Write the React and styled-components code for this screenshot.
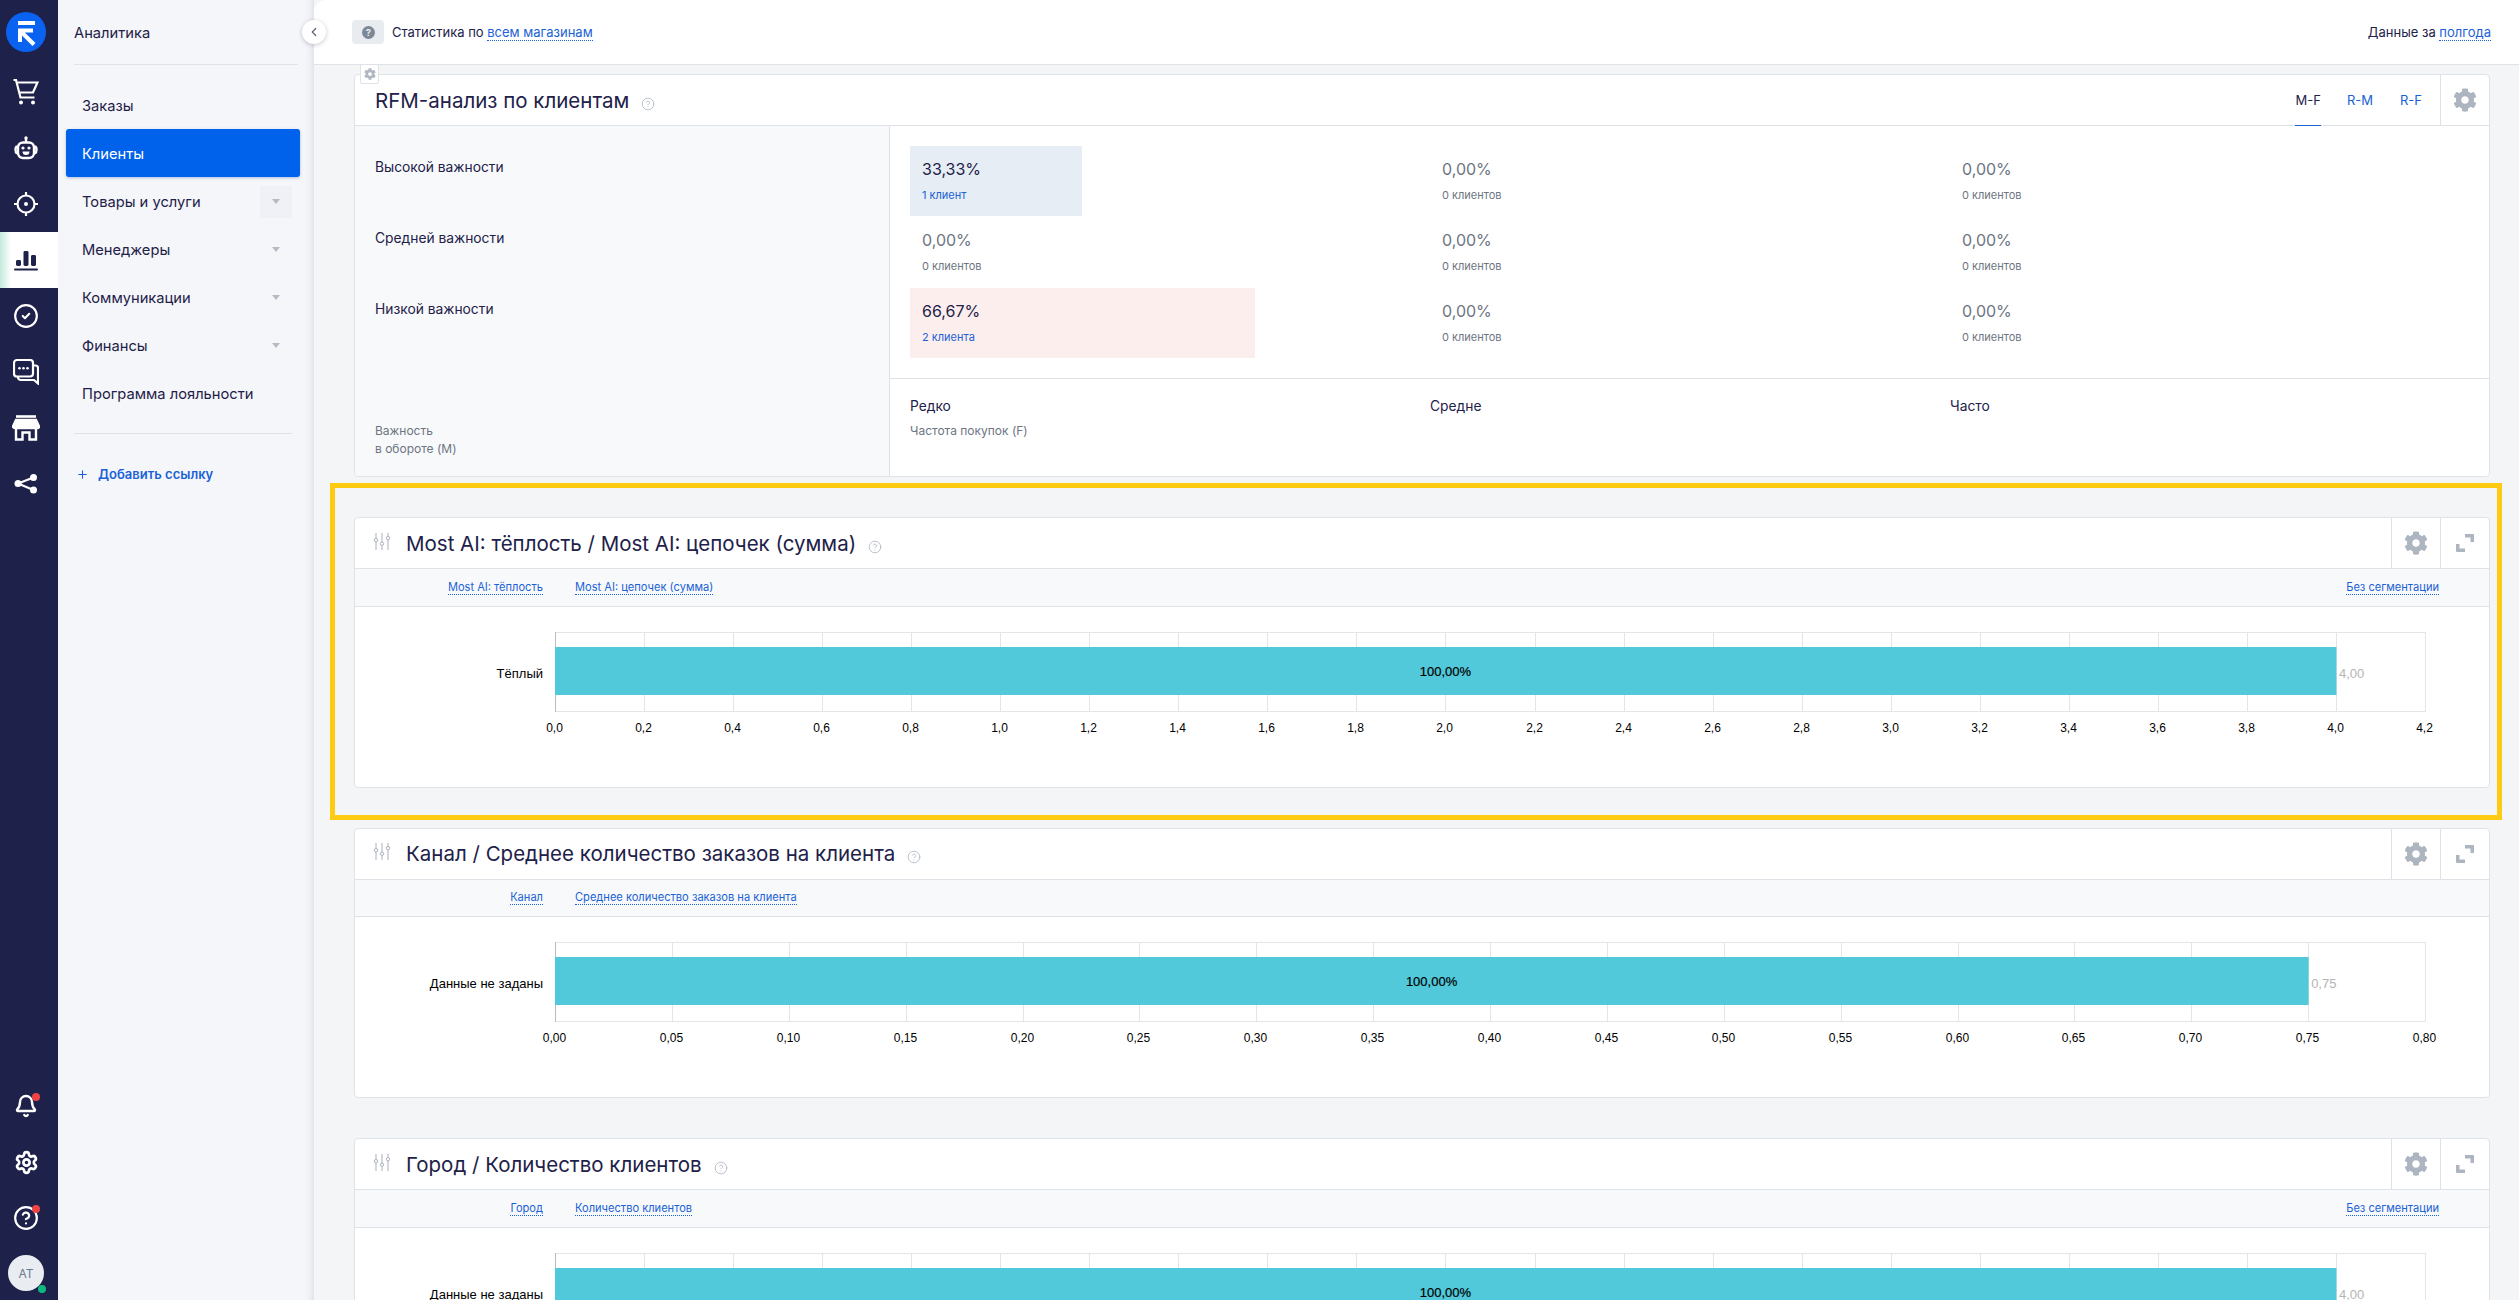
import React from "react";
import styled, { createGlobalStyle } from "styled-components";
import { CircleCheck, CircleHelp, Bell, Settings, ChevronLeft, Plus } from "lucide-react";
import { FaCog } from "react-icons/fa";

const NAVY = "#1e2149";
const LINK = "#1a62d6";
const LINE = "#dfe3e8";

const GlobalStyle = createGlobalStyle`
  html, body {
    margin: 0;
    height: 100%;
    overflow: hidden;
    background: #f4f5f7;
    font-family: Inter, "Noto Sans", sans-serif;
    color: ${NAVY};
  }
  * { box-sizing: border-box; }
`;

const Page = styled.div`
  display: flex;
  height: 1300px;
  overflow: hidden;
`;

const Rail = styled.nav`
  flex: 0 0 58px;
  display: flex;
  flex-direction: column;
  background: ${NAVY};
  color: #fff;
`;

const LogoSlot = styled.div`
  height: 64px;
  display: flex;
  align-items: center;
  justify-content: center;
  padding-right: 6px;
`;

const RailItem = styled.div`
  position: relative;
  height: 56px;
  display: flex;
  align-items: center;
  justify-content: center;
  padding-right: 6px;
  color: ${(p) => (p.$active ? NAVY : "#fff")};
  background: ${(p) => (p.$active ? "linear-gradient(90deg, #c4e9da 0, #fff 11px)" : "transparent")};
`;

const RedDot = styled.span`
  position: absolute;
  top: 15px;
  left: 32px;
  width: 8px;
  height: 8px;
  border-radius: 50%;
  background: #ef4444;
`;

const RailBottom = styled.div`
  margin-top: auto;
  padding-bottom: 9px;
`;

const Avatar = styled.div`
  position: relative;
  margin: 9px 0 0 8px;
  width: 36px;
  height: 36px;
  border-radius: 50%;
  background: #e9edf1;
  color: #6b7a90;
  font-size: 12px;
  display: flex;
  align-items: center;
  justify-content: center;
`;

const OnlineDot = styled.span`
  position: absolute;
  right: -2px;
  bottom: -2px;
  width: 8px;
  height: 8px;
  border-radius: 50%;
  background: #10b981;
`;

const SubMenu = styled.aside`
  position: relative;
  z-index: 2;
  flex: 0 0 256px;
  background: #f5f6f9;
  box-shadow: inset -10px 0 10px -10px rgba(30, 33, 73, 0.16);
`;

const MenuTitle = styled.div`
  margin-left: 16px;
  width: 224px;
  height: 65px;
  border-bottom: 1px solid ${LINE};
  font-size: 14.7px;
  line-height: 66px;
`;

const MenuList = styled.div`
  padding-top: 16px;
`;

const MenuItem = styled.div`
  display: flex;
  align-items: center;
  margin: 0 14px 0 8px;
  height: 48px;
  padding: 1px 8px 0 16px;
  border-radius: 3px;
  font-size: 14.7px;
  color: ${(p) => (p.$active ? "#fff" : NAVY)};
  background: ${(p) => (p.$active ? "#0061ea" : "transparent")};
  box-shadow: ${(p) => (p.$active ? "0 1px 3px rgba(0, 60, 160, 0.3)" : "none")};
`;

const CaretBox = styled.span`
  margin-left: auto;
  width: 32px;
  height: 32px;
  border-radius: 3px;
  display: flex;
  align-items: center;
  justify-content: center;
  background: ${(p) => (p.$hover ? "#eff1f6" : "transparent")};
  &::after {
    content: "";
    border-left: 4px solid transparent;
    border-right: 4px solid transparent;
    border-top: 5px solid #b4bbc6;
  }
`;

const MenuDivider = styled.div`
  margin: 16px 0 0 16px;
  width: 218px;
  border-top: 1px solid ${LINE};
`;

const AddLink = styled.div`
  display: flex;
  align-items: center;
  gap: 9px;
  margin-top: 20px;
  padding-left: 18px;
  height: 40px;
  color: ${LINK};
  font-size: 13px;
  font-weight: 600;
`;

const CollapseButton = styled.button`
  position: absolute;
  top: 20px;
  right: -12px;
  width: 24px;
  height: 24px;
  padding: 0;
  border: 0;
  border-radius: 50%;
  background: #fff;
  color: #5e6678;
  box-shadow: 0 1px 4px rgba(30, 33, 73, 0.25);
  display: flex;
  align-items: center;
  justify-content: center;
`;

const Main = styled.main`
  flex: 1;
  min-width: 0;
`;

const TopBar = styled.header`
  height: 65px;
  background: #fff;
  border-bottom: 1px solid ${LINE};
  border-top-left-radius: 12px;
  padding: 0 28px 0 38px;
  display: flex;
  align-items: center;
  font-size: 13px;
`;

const StatBadge = styled.span`
  width: 32px;
  height: 24px;
  margin-right: 8px;
  border-radius: 4px;
  background: #e8ebef;
  display: flex;
  align-items: center;
  justify-content: center;
`;

const DotLink = styled.span`
  color: ${LINK};
  border-bottom: 1px dotted ${LINK};
  white-space: nowrap;
`;

const TopRight = styled.div`
  margin-left: auto;
`;

const Content = styled.div`
  padding: 9px 29px 0 40px;
  display: flex;
  flex-direction: column;
  gap: 40px;
`;

const Card = styled.section`
  position: relative;
  background: #fff;
  border: 1px solid ${LINE};
  border-radius: 4px;
  ${(p) =>
    p.$highlight &&
    `&::after {
      content: "";
      position: absolute;
      top: -35px;
      left: -25px;
      right: -13px;
      bottom: -33px;
      border: 5px solid #ffcb12;
      pointer-events: none;
    }`}
`;

const GearTab = styled.span`
  position: absolute;
  top: -11px;
  left: 5px;
  width: 19px;
  height: 20px;
  background: #fff;
  border: 1px solid ${LINE};
  border-radius: 2px;
  color: #b0b8c3;
  display: flex;
  align-items: center;
  justify-content: center;
`;

const CardHeader = styled.div`
  height: 51px;
  display: flex;
  align-items: center;
  border-bottom: 1px solid ${LINE};
  padding-left: ${(p) => (p.$plain ? "20px" : "18px")};
`;

const CardTitle = styled.h2`
  margin: 0;
  font-size: 20.5px;
  font-weight: 400;
  white-space: nowrap;
`;

const HelpMark = styled.span`
  display: flex;
  margin: 7px 0 0 12px;
  color: #b4bbc7;
`;

const SlidersMark = styled.span`
  display: flex;
  margin: -4px 15px 0 0;
  color: #a9b1bd;
`;

const HeaderRight = styled.div`
  margin-left: auto;
  align-self: stretch;
  display: flex;
`;

const Tab = styled.div`
  margin: 0 ${(p) => p.$gap}px -1px 0;
  display: flex;
  align-items: center;
  font-size: 13px;
  color: ${(p) => (p.$active ? NAVY : LINK)};
  border-bottom: 1px solid ${(p) => (p.$active ? LINK : "transparent")};
`;

const IconCell = styled.div`
  width: 49px;
  display: flex;
  align-items: center;
  justify-content: center;
  border-left: 1px solid ${LINE};
  color: #adb5c0;
`;

const RfmBody = styled.div`
  display: grid;
  grid-template-columns: 535px 1fr;
  height: 350px;
`;

const RfmLegend = styled.div`
  display: flex;
  flex-direction: column;
  background: #f8f9fb;
  border-right: 1px solid ${LINE};
  padding: 31px 20px 18px;
  border-bottom-left-radius: 4px;
`;

const LegendRow = styled.div`
  height: 71px;
  font-size: 13.8px;
  line-height: 20px;
`;

const LegendAxis = styled.div`
  margin-top: auto;
  font-size: 12px;
  line-height: 18px;
  color: #6d7582;
`;

const RfmRight = styled.div`
  display: flex;
  flex-direction: column;
`;

const RfmGrid = styled.div`
  display: grid;
  grid-template-columns: repeat(3, 520px);
  grid-auto-rows: 70px;
  row-gap: 1px;
  padding: 20px 0 20px 20px;
  border-bottom: 1px solid ${LINE};
`;

const RfmCell = styled.div`
  width: ${(p) => p.$width || 300}px;
  padding: 12px;
  background: ${(p) => p.$bg || "transparent"};
`;

const Percent = styled.div`
  font-size: 16px;
  line-height: 22px;
  color: ${(p) => (p.$dim ? "#6d7582" : NAVY)};
`;

const Clients = styled.div`
  margin-top: 7px;
  font-size: 11px;
  line-height: 16px;
  color: ${(p) => (p.$dim ? "#6d7582" : LINK)};
`;

const RfmAxis = styled.div`
  display: grid;
  grid-template-columns: repeat(3, 520px);
  padding: 17px 0 0 20px;
  font-size: 13.8px;
  line-height: 20px;
`;

const AxisNote = styled.div`
  margin-top: 6px;
  font-size: 12px;
  line-height: 18px;
  color: #6d7582;
`;

const FilterRow = styled.div`
  height: 37.5px;
  display: flex;
  align-items: center;
  background: #f8f9fb;
  border-bottom: 1px solid ${LINE};
  font-size: 11.1px;
  padding-right: 50px;
`;

const FilterFirst = styled.div`
  width: 188px;
  margin-right: 32px;
  display: flex;
  justify-content: flex-end;
`;

const FilterEnd = styled.div`
  margin-left: auto;
`;

const ChartSvg = styled.svg`
  display: block;
  width: 2134px;
  height: 180px;
  font-family: "Liberation Sans", Arial, sans-serif;
  font-size: 12px;
`;

const Logo = () => (
  <svg width="40" height="40" viewBox="0 0 40 40">
    <circle cx="20" cy="20" r="20" fill="#0a62f0" />
    <rect x="12" y="9" width="17" height="4" fill="#fff" />
    <path d="M12 16.5h15v4h-8.2L29.5 31l-3 3-10.5-10.5V30h-4z" fill="#fff" />
  </svg>
);

const CartIcon = () => (
  <svg width="26" height="26" viewBox="0 0 26 26" fill="none" stroke="currentColor" strokeWidth="2.2">
    <path d="M0.500 1H3L7.500 18.500H21.500" />
    <path d="M4.500 3.500H24.500L20 13.500H7" />
    <circle cx="8" cy="23.500" r="2" fill="currentColor" stroke="none" />
    <circle cx="20" cy="23.500" r="2" fill="currentColor" stroke="none" />
  </svg>
);

const RobotIcon = () => (
  <svg width="24" height="26" viewBox="0 0 24 26" fill="none" stroke="currentColor" strokeWidth="2.4">
    <circle cx="12" cy="3" r="1.7" fill="currentColor" stroke="none" />
    <path d="M12 4v3" />
    <rect x="4" y="7.5" width="16" height="15.5" rx="5" />
    <path d="M3 11.5c-2 .5-2 6 0 7M21 11.5c2 .5 2 6 0 7" />
    <circle cx="9" cy="13" r="1.6" fill="currentColor" stroke="none" />
    <circle cx="15" cy="13" r="1.6" fill="currentColor" stroke="none" />
    <path d="M8.500 16.500h7a3.500 3.500 0 0 1-7 0z" fill="currentColor" stroke="none" />
  </svg>
);

const TargetIcon = () => (
  <svg width="24" height="24" viewBox="0 0 24 24" fill="none" stroke="currentColor" strokeWidth="2.2">
    <circle cx="12" cy="12" r="8.5" />
    <circle cx="12" cy="12" r="2" fill="currentColor" stroke="none" />
    <path d="M12 0v4M12 20v4M0 12h4M20 12h4" />
  </svg>
);

const BarsIcon = () => (
  <svg width="24" height="22" viewBox="0 0 24 22" fill="currentColor">
    <rect x="2" y="11" width="5" height="6" rx="1.4" />
    <rect x="9.5" y="2" width="5" height="15" rx="1.4" />
    <rect x="17" y="6" width="5" height="11" rx="1.4" />
    <rect x="0" y="19.4" width="24" height="2.2" rx="1" />
  </svg>
);

const ChatIcon = () => (
  <svg width="26" height="26" viewBox="0 0 26 26" fill="none" stroke="currentColor" strokeWidth="2.2">
    <path d="M5 17.5H4a3 3 0 0 1-3-3V4a3 3 0 0 1 3-3h13a3 3 0 0 1 3 3v10.500a3 3 0 0 1-3 3z" />
    <path d="M20 6.500h2.500a2.500 2.500 0 0 1 2.500 2.500v15.500l-4-3.500H7.500a3 3 0 0 1-2.500-3.500" />
    <circle cx="6.500" cy="9.200" r="1.300" fill="currentColor" stroke="none" />
    <circle cx="10.500" cy="9.200" r="1.300" fill="currentColor" stroke="none" />
    <circle cx="14.500" cy="9.200" r="1.300" fill="currentColor" stroke="none" />
  </svg>
);

const StoreIcon = () => (
  <svg width="28" height="26" viewBox="0 0 28 26" fill="none" stroke="currentColor" strokeWidth="2.400">
    <path d="M4 1.500h20" strokeWidth="2.600" />
    <path d="M4 5h20l3 6.500c0 1-1 1.500-2 1.500H3c-1 0-2-.5-2-1.500z" fill="currentColor" />
    <path d="M4 13v11.500h6.500V17.500h7v7H24V13" />
  </svg>
);

const ShareIcon = () => (
  <svg width="24" height="20" viewBox="0 0 24 20" fill="currentColor" stroke="currentColor">
    <circle cx="4" cy="9.500" r="3.500" stroke="none" />
    <circle cx="19.500" cy="3.500" r="3.500" stroke="none" />
    <circle cx="19.500" cy="16" r="3.500" stroke="none" />
    <path d="M4 9.500L19.500 3.500M4 9.500L19.500 16" strokeWidth="2.200" fill="none" />
  </svg>
);

const SlidersIcon = () => (
  <svg width="18" height="17" viewBox="0 0 18 17" fill="none" stroke="currentColor" strokeWidth="1">
    <path d="M3 0v5.500M3 9v8M9 0v9M9 12.500V17M15 0v3.500M15 7v10" />
    <circle cx="3" cy="7.200" r="1.700" />
    <circle cx="9" cy="10.700" r="1.700" />
    <circle cx="15" cy="5.200" r="1.700" />
  </svg>
);

const ExpandIcon = () => (
  <svg width="18" height="18" viewBox="0 0 18 18" fill="currentColor">
    <path d="M9 0h8a1 1 0 0 1 1 1v7h-3.500V3.500H9zM0 10h3.500v4.500H9V18H1a1 1 0 0 1-1-1z" />
  </svg>
);

const QuestionBadge = () => (
  <svg width="13" height="13" viewBox="0 0 13 13">
    <circle cx="6.500" cy="6.500" r="6.500" fill="#7e8797" />
    <text x="6.500" y="10" textAnchor="middle" fontSize="9.500" fontWeight="700" fill="#e8ebef">?</text>
  </svg>
);

const Help = () => (
  <HelpMark>
    <CircleHelp size={14} strokeWidth={1.5} />
  </HelpMark>
);

const PLOT_LEFT = 200;
const PLOT_WIDTH = 1870;

// горизонтальный бар, значения оси идут шагом step от нуля
const BarChart = ({ label, value, step, ticks, digits, valueLabel }) => {
  const max = step * ticks;
  const toX = (v) => PLOT_LEFT + (v / max) * PLOT_WIDTH;
  const tickList = Array.from({ length: ticks + 1 }, (_, i) => i);
  return (
    <ChartSvg viewBox="0 0 2134 180">
      <line x1={PLOT_LEFT} x2={PLOT_LEFT + PLOT_WIDTH} y1="25.500" y2="25.500" stroke="#e3e5e8" />
      <line x1={PLOT_LEFT} x2={PLOT_LEFT + PLOT_WIDTH} y1="104.500" y2="104.500" stroke="#e3e5e8" />
      {tickList.map((i) => {
        const x = Math.round(toX(i * step)) + 0.5;
        return (
          <g key={i}>
            <line x1={x} x2={x} y1="25" y2="105" stroke={i === 0 ? "#b8bcc2" : "#e3e5e8"} />
            <text x={x - 1} y="124.500" textAnchor="middle" fill="#000">
              {(i * step).toFixed(digits).replace(".", ",")}
            </text>
          </g>
        );
      })}
      <rect x={PLOT_LEFT} y="40" width={toX(value) - PLOT_LEFT + 0.5} height="48" fill="#51c9da" />
      <text x="188" y="71" fontSize="13" textAnchor="end" fill="#000">{label}</text>
      <text x={(PLOT_LEFT + toX(value)) / 2} y="69" fontSize="13" textAnchor="middle" fill="#000" stroke="#000" strokeWidth="0.2">
        100,00%
      </text>
      <text x={toX(value) + 3} y="71" fontSize="13" fill="#b5b5b5">{valueLabel}</text>
    </ChartSvg>
  );
};

const ChartCard = ({ title, first, second, segment, highlight, chart }) => (
  <Card $highlight={highlight}>
    <CardHeader>
      <SlidersMark>
        <SlidersIcon />
      </SlidersMark>
      <CardTitle>{title}</CardTitle>
      <Help />
      <HeaderRight>
        <IconCell>
          <FaCog size={24} />
        </IconCell>
        <IconCell>
          <ExpandIcon />
        </IconCell>
      </HeaderRight>
    </CardHeader>
    <FilterRow>
      <FilterFirst>
        <DotLink>{first}</DotLink>
      </FilterFirst>
      <DotLink>{second}</DotLink>
      {segment && (
        <FilterEnd>
          <DotLink>Без сегментации</DotLink>
        </FilterEnd>
      )}
    </FilterRow>
    <BarChart {...chart} />
  </Card>
);

const menu = [
  { name: "Заказы" },
  { name: "Клиенты", active: true },
  { name: "Товары и услуги", caret: true, hover: true },
  { name: "Менеджеры", caret: true },
  { name: "Коммуникации", caret: true },
  { name: "Финансы", caret: true },
  { name: "Программа лояльности" },
];

const rfmRows = [
  [
    { percent: "33,33%", clients: "1 клиент", bg: "#e6edf4", width: 172 },
    { percent: "0,00%", clients: "0 клиентов", dim: true },
    { percent: "0,00%", clients: "0 клиентов", dim: true },
  ],
  [
    { percent: "0,00%", clients: "0 клиентов", dim: true },
    { percent: "0,00%", clients: "0 клиентов", dim: true },
    { percent: "0,00%", clients: "0 клиентов", dim: true },
  ],
  [
    { percent: "66,67%", clients: "2 клиента", bg: "#fdeeee", width: 345 },
    { percent: "0,00%", clients: "0 клиентов", dim: true },
    { percent: "0,00%", clients: "0 клиентов", dim: true },
  ],
];

const App = () => (
  <>
    <GlobalStyle />
    <Page>
      <Rail>
        <LogoSlot>
          <Logo />
        </LogoSlot>
        <RailItem>
          <CartIcon />
        </RailItem>
        <RailItem>
          <RobotIcon />
        </RailItem>
        <RailItem>
          <TargetIcon />
        </RailItem>
        <RailItem $active>
          <BarsIcon />
        </RailItem>
        <RailItem>
          <CircleCheck size={26} strokeWidth={2} />
        </RailItem>
        <RailItem>
          <ChatIcon />
        </RailItem>
        <RailItem>
          <StoreIcon />
        </RailItem>
        <RailItem>
          <ShareIcon />
        </RailItem>
        <RailBottom>
          <RailItem>
            <Bell size={24} strokeWidth={2.4} />
            <RedDot />
          </RailItem>
          <RailItem>
            <Settings size={25} strokeWidth={2.6} />
          </RailItem>
          <RailItem>
            <CircleHelp size={26} strokeWidth={2} />
            <RedDot />
          </RailItem>
          <Avatar>
            AT
            <OnlineDot />
          </Avatar>
        </RailBottom>
      </Rail>

      <SubMenu>
        <MenuTitle>Аналитика</MenuTitle>
        <MenuList>
          {menu.map((item) => (
            <MenuItem key={item.name} $active={item.active}>
              {item.name}
              {item.caret && <CaretBox $hover={item.hover} />}
            </MenuItem>
          ))}
        </MenuList>
        <MenuDivider />
        <AddLink>
          <Plus size={13} strokeWidth={2} />
          Добавить ссылку
        </AddLink>
        <CollapseButton>
          <ChevronLeft size={14} strokeWidth={2.2} />
        </CollapseButton>
      </SubMenu>

      <Main>
        <TopBar>
          <StatBadge>
            <QuestionBadge />
          </StatBadge>
          <span>
            Статистика по <DotLink>всем магазинам</DotLink>
          </span>
          <TopRight>
            Данные за <DotLink>полгода</DotLink>
          </TopRight>
        </TopBar>
        <Content>
          <Card>
            <GearTab>
              <FaCog size={12} />
            </GearTab>
            <CardHeader $plain>
              <CardTitle>RFM-анализ по клиентам</CardTitle>
              <Help />
              <HeaderRight>
                <Tab $active $gap={26}>M-F</Tab>
                <Tab $gap={27}>R-M</Tab>
                <Tab $gap={18}>R-F</Tab>
                <IconCell>
                  <FaCog size={24} />
                </IconCell>
              </HeaderRight>
            </CardHeader>
            <RfmBody>
              <RfmLegend>
                <LegendRow>Высокой важности</LegendRow>
                <LegendRow>Средней важности</LegendRow>
                <LegendRow>Низкой важности</LegendRow>
                <LegendAxis>
                  Важность
                  <br />в обороте (M)
                </LegendAxis>
              </RfmLegend>
              <RfmRight>
                <RfmGrid>
                  {rfmRows.flat().map((cell, i) => (
                    <RfmCell key={i} $bg={cell.bg} $width={cell.width}>
                      <Percent $dim={cell.dim}>{cell.percent}</Percent>
                      <Clients $dim={cell.dim}>{cell.clients}</Clients>
                    </RfmCell>
                  ))}
                </RfmGrid>
                <RfmAxis>
                  <div>
                    Редко
                    <AxisNote>Частота покупок (F)</AxisNote>
                  </div>
                  <div>Средне</div>
                  <div>Часто</div>
                </RfmAxis>
              </RfmRight>
            </RfmBody>
          </Card>

          <ChartCard
            highlight
            title="Most AI: тёплость / Most AI: цепочек (сумма)"
            first="Most AI: тёплость"
            second="Most AI: цепочек (сумма)"
            segment
            chart={{ label: "Тёплый", value: 4, step: 0.2, ticks: 21, digits: 1, valueLabel: "4,00" }}
          />
          <ChartCard
            title="Канал / Среднее количество заказов на клиента"
            first="Канал"
            second="Среднее количество заказов на клиента"
            chart={{ label: "Данные не заданы", value: 0.75, step: 0.05, ticks: 16, digits: 2, valueLabel: "0,75" }}
          />
          <ChartCard
            title="Город / Количество клиентов"
            first="Город"
            second="Количество клиентов"
            segment
            chart={{ label: "Данные не заданы", value: 4, step: 0.2, ticks: 21, digits: 1, valueLabel: "4,00" }}
          />
        </Content>
      </Main>
    </Page>
  </>
);

export default App;
